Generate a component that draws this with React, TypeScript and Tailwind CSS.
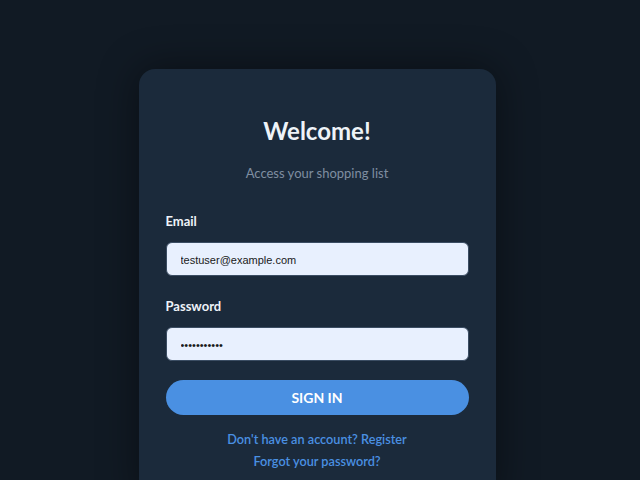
const FONT = { fontFamily: "Lato, 'Noto Sans', sans-serif" };
const INPUT_FONT = { fontFamily: "'Liberation Sans', Arial, sans-serif" };

export default function App() {
  return (
    <div className="min-h-screen bg-[#111a24] pt-[69px] pr-[6px] pb-10" style={FONT}>
      <div className="mx-auto w-[357px] rounded-[16px] bg-[#1b2a3b] px-[27px] pt-[46px] pb-[32px] shadow-[0_0_40px_rgba(0,0,0,0.45)]">
        <h1 className="text-center text-[24px] font-bold leading-[32px] text-[#eef3f8]">
          Welcome!
        </h1>
        <p className="mt-[16px] text-center text-[13px] leading-[20px] text-[#7f8ea1]">
          Access your shopping list
        </p>

        <label className="mt-[28px] block text-[13px] font-bold leading-[20px] text-[#eef3f8]">
          Email
        </label>
        <input
          type="email"
          defaultValue="testuser@example.com"
          className="mt-[11px] block h-[34px] w-full rounded-[6px] border border-[#3b4d63] bg-[#e8f0fe] px-[14px] pt-[2px] text-[11px] text-[#1a1a1a] outline-none"
          style={INPUT_FONT}
        />

        <label className="mt-[20px] block text-[13px] font-bold leading-[20px] text-[#eef3f8]">
          Password
        </label>
        <input
          type="password"
          defaultValue="password123"
          className="mt-[11px] block h-[34px] w-full rounded-[6px] border border-[#3b4d63] bg-[#e8f0fe] px-[14px] pt-[2px] text-[11px] text-[#1a1a1a] outline-none"
          style={INPUT_FONT}
        />

        <button className="mt-[19px] block h-[35px] w-full rounded-full bg-[#4a90e2] text-[14px] font-bold text-white">
          SIGN IN
        </button>

        <p className="mt-[14px] text-center text-[12.7px] font-semibold leading-[20px] text-[#4a90e2]">
          Don't have an account? Register
        </p>
        <p className="mt-[2px] text-center text-[12.7px] font-semibold leading-[20px] text-[#4a90e2]">
          Forgot your password?
        </p>
      </div>
    </div>
  );
}
